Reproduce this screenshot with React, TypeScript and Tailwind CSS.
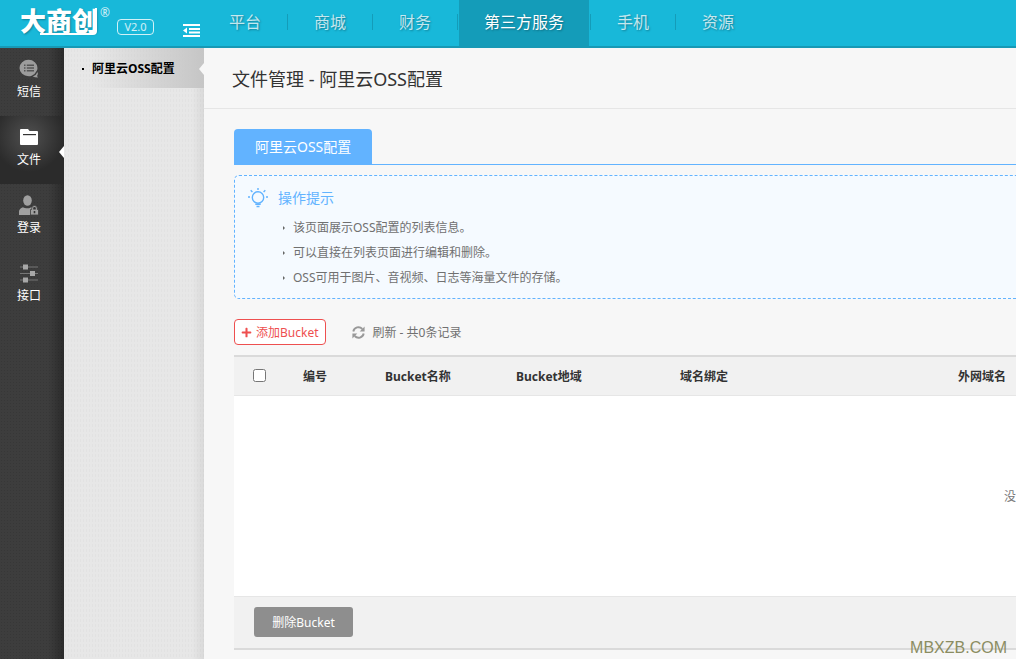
import React from 'react';
import { FaPlus } from 'react-icons/fa';

interface NavItem {
    label: string;
    active?: boolean;
}

interface SideItem {
    label: string;
    icon: React.ReactNode;
    active?: boolean;
}

const navItems: NavItem[] = [
    { label: '平台' },
    { label: '商城' },
    { label: '财务' },
    { label: '第三方服务', active: true },
    { label: '手机' },
    { label: '资源' },
];

const tips = [
    '该页面展示OSS配置的列表信息。',
    '可以直接在列表页面进行编辑和删除。',
    'OSS可用于图片、音视频、日志等海量文件的存储。',
];

const SmsIcon = () => (
    <svg className="h-5 w-5" viewBox="0 0 20 20" fill="#9c9c9c">
        <path d="M9.500.8a9 8.200 0 1 0 0 16.400q1.700 0 3.200-.5 3.300-1.200 4.500-4.200 1.300-1.600 1.300-3.600A9 8.200 0 0 0 9.500.8z" />
        <path d="M18.500 13q-1.200 3.300-4.700 4.500 2.200 1 5.200.9-.8-.8-.8-1.800 1.300-1.500.3-3.600z" />
        <path d="M5 5.500h1.500V7H5zM7.800 5.500H15V7H7.800zM5 8.300h1.500v1.500H5zM7.800 8.300H15v1.500H7.800zM5 11.100h1.500v1.500H5zM7.800 11.100H15v1.500H7.800z" fill="#555" />
    </svg>
);

const FolderIcon = () => (
    <svg className="h-5 w-5" viewBox="0 0 20 20" fill="#fff">
        <path d="M1 3a1 1 0 0 1 1-1h7l1.500 2H18a1 1 0 0 1 1 1v12a1 1 0 0 1-1 1H2a1 1 0 0 1-1-1z" />
        <path d="M4 7h13v1.200H4z" fill="#333" />
    </svg>
);

const LoginIcon = () => (
    <svg className="h-5 w-5" viewBox="0 0 20 20" fill="#a0a0a0">
        <ellipse cx="8.500" cy="5.500" rx="4.300" ry="5.200" />
        <path d="M0 20v-3.500c0-2 1.500-3.500 4-4.300 1.200.8 2.500 1.100 4.500 1.100s2.500-.3 3.500-1l1 .3V20z" />
        <path d="M11.500 14.500h1.200v-1.200a2.800 2.800 0 0 1 5.600 0v1.200h1.200V20h-8z" stroke="#3d3d3d" strokeWidth=".8" />
        <path d="M14.200 14.500v-1.200a1.300 1.300 0 0 1 2.600 0v1.200zM14.700 16h1.600v2.200h-1.600z" fill="#333" />
    </svg>
);

const ApiIcon = () => (
    <svg className="h-5 w-5" viewBox="0 0 20 20">
        <path d="M1 4h18M1 10.500h18M1 17h18" stroke="#777" strokeWidth="1.200" />
        <path d="M4 1.500h5v5H4zM11 8h5v5h-5zM4 14.500h5v5H4z" fill="#a8a8a8" />
    </svg>
);

const BulbIcon = () => (
    <svg className="h-5 w-5" viewBox="0 0 20 20" fill="none" stroke="#62b3ff" strokeWidth="1.400">
        <circle cx="10" cy="9.500" r="5.700" />
        <path d="M7.300 16.200h5.400M8.500 18.500h3M10 0v2M0 9h2M18 9h2M2.700 2.300l1.700 1.700M17.300 2.300l-1.700 1.700" />
    </svg>
);

const RefreshIcon = () => (
    <svg className="h-[13px] w-[13px]" viewBox="0 0 13 13">
        <path d="M1.300 5.500A5.200 5.200 0 0 1 10.300 3M11.700 7.500A5.200 5.200 0 0 1 2.700 10" fill="none" stroke="#999" strokeWidth="1.900" />
        <path d="M12.600.6v4.900H7.700zM.4 12.400V7.500h4.900z" fill="#999" />
    </svg>
);

const CollapseIcon = () => (
    <svg className="h-[13px] w-[17px]" viewBox="0 0 17 13" fill="#fff">
        <path d="M0 0h17v2H0zM6 4h11v2H6zM6 7.500h11v2H6zM0 11h17v2H0zM0 6.500l4-3v6z" />
    </svg>
);

const sideItems: SideItem[] = [
    { label: '短信', icon: <SmsIcon /> },
    { label: '文件', icon: <FolderIcon />, active: true },
    { label: '登录', icon: <LoginIcon /> },
    { label: '接口', icon: <ApiIcon /> },
];

const Header: React.FC = () => (
    <header className="flex h-12 border-b-2 border-[#1799b5] bg-[#18b8d9] text-white">
        <div className="flex w-[203px] shrink-0">
            <div className="relative ml-5 h-full w-[97px]">
                <span className="block text-[26px] leading-[42px] font-black [text-shadow:1px_1px_2px_rgba(0,0,0,0.3)]">大商创</span>
                <svg className="absolute top-2 left-0 h-7 w-[78px]" viewBox="0 0 78 28" fill="none" stroke="#fff" strokeWidth="2">
                    <path d="M20 26h53q3 0 3-3V0" />
                </svg>
                <span className="absolute top-[7px] left-20 text-[12px] leading-3 opacity-80">®</span>
            </div>
            <span className="mt-[19px] h-4 w-[37px] rounded-[4px] border border-white/80 text-center text-[11px] leading-[14px] text-white/80">V2.0</span>
            <button type="button" aria-label="收起菜单" className="mt-6 ml-[29px] h-[13px]">
                <CollapseIcon />
            </button>
        </div>
        <nav className="flex">
            {navItems.map((item, index) => (
                <div key={item.label} className="flex">
                    <a
                        href="#"
                        className={`mx-px px-[25px] text-[16px] leading-[45px] [text-shadow:1px_1px_2px_rgba(0,0,0,0.3)] ${item.active ? 'bg-[#149cb9] text-white' : 'text-white/75'}`}
                    >
                        {item.label}
                    </a>
                    {index < navItems.length - 1 && <span className="mt-[14px] h-4 w-px bg-[#149cb9]" />}
                </div>
            ))}
        </nav>
    </header>
);

const Sidebar: React.FC = () => (
    <aside className="flex shrink-0">
        <nav className="w-16 bg-[#3d3d3d] bg-[linear-gradient(to_right,transparent_75%,rgba(0,0,0,0.3)),radial-gradient(rgba(0,0,0,0.1)_1px,transparent_1px)] bg-[length:100%_100%,3px_3px]">
            {sideItems.map((item) => (
                <a
                    key={item.label}
                    href="#"
                    className={`relative flex h-[68px] flex-col items-center gap-[3px] pt-[11px] pr-[6px] text-[12px] leading-5 text-white ${item.active ? 'bg-[radial-gradient(circle_at_45%_30%,#505050,#2b2b2b_60%)]' : ''}`}
                >
                    {item.icon}
                    {item.label}
                    {item.active && <span className="absolute top-[30px] right-0 border-y-[6px] border-r-[5px] border-y-transparent border-r-white" />}
                </a>
            ))}
        </nav>
        <nav className="w-[140px] bg-[#e7e7e7] bg-[linear-gradient(to_right,transparent_91%,rgba(0,0,0,0.06)),radial-gradient(rgba(0,0,0,0.025)_1px,transparent_1px)] bg-[length:100%_100%,3px_5px]">
            <a href="#" className="relative flex h-10 items-center gap-2 bg-linear-to-r from-transparent from-20% to-[#c6c6c6] pt-px pl-[18px] text-[12px] leading-5 font-bold text-black">
                <span className="h-[2px] w-[2px] bg-black" />
                阿里云OSS配置
                <span className="absolute top-[15px] right-0 border-y-[6px] border-r-[5px] border-y-transparent border-r-[#f7f7f7]" />
            </a>
        </nav>
    </aside>
);

const BucketTable: React.FC = () => (
    <table className="mt-[10px] w-full table-fixed border-collapse border-y-2 border-[#dadada] text-[12px] leading-5">
        <thead>
            <tr className="h-[39px] border-b border-b-[#e6e6e6] bg-[#f1f1f1] text-left text-[#333]">
                <th className="w-[69px] pl-[19px]">
                    <input type="checkbox" aria-label="全选" className="block h-[13px] w-[13px]" />
                </th>
                <th className="w-[82px] pt-[3px]">编号</th>
                <th className="w-[131px] pt-[3px]">Bucket名称</th>
                <th className="w-[164px] pt-[3px]">Bucket地域</th>
                <th className="w-[278px] pt-[3px]">域名绑定</th>
                <th className="pt-[3px]">外网域名</th>
            </tr>
        </thead>
        <tbody>
            <tr className="h-[201px] bg-white text-right text-[#777]">
                <td colSpan={6} className="pt-[3px]">没</td>
            </tr>
        </tbody>
        <tfoot>
            <tr className="border-t border-t-[#e6e6e6] bg-[#f1f1f1]">
                <td colSpan={6} className="h-[53px] pl-5">
                    <button type="button" className="block h-[30px] w-[99px] rounded-[3px] bg-[#8e8e8e] pt-[2px] text-white">
                        删除Bucket
                    </button>
                </td>
            </tr>
        </tfoot>
    </table>
);

const App: React.FC = () => {
    return (
        <div className="relative flex min-h-screen flex-col overflow-hidden bg-[#f7f7f7] font-['Noto_Sans','Noto_Sans_CJK_SC',sans-serif]">
            <Header />
            <div className="flex flex-1">
                <Sidebar />
                <main className="min-w-0 flex-1">
                    <h1 className="border-b border-[#e6e6e6] pt-[2px] pl-7 text-[18px] leading-[58px] text-[#333]">文件管理 - 阿里云OSS配置</h1>
                    <div className="pt-5 pl-[30px]">
                        <div className="flex border-b border-[#62b3ff]">
                            <a href="#" className="rounded-t-[4px] bg-[#62b3ff] px-[21px] text-[14px] leading-[35px] text-white">
                                阿里云OSS配置
                            </a>
                        </div>
                        <section className="mt-[10px] rounded-l-[5px] border border-r-0 border-dashed border-[#62b3ff] bg-[#f5faff] pt-[10px] pb-2 pl-[13px]">
                            <h2 className="flex items-center gap-[10px] text-[14px] leading-6 text-[#62b3ff]">
                                <BulbIcon />
                                操作提示
                            </h2>
                            <ul className="mt-[5px] pl-[35px] text-[12px] leading-[25px] text-[#707070]">
                                {tips.map((tip) => (
                                    <li key={tip} className="flex items-center gap-2">
                                        <span className="border-y-2 border-l-2 border-y-transparent border-l-[#666]" />
                                        {tip}
                                    </li>
                                ))}
                            </ul>
                        </section>
                        <div className="mt-5 flex items-center text-[12px] leading-6">
                            <button type="button" className="flex h-[26px] items-center gap-1 rounded-[4px] border border-[#ee4f4f] bg-white px-[6px] pt-px text-[#ee4f4f]">
                                <FaPlus className="h-[11px] w-[11px]" />
                                添加Bucket
                            </button>
                            <button type="button" className="ml-[26px] flex items-center gap-2 pt-px text-[#707070]">
                                <RefreshIcon />
                                刷新 - 共0条记录
                            </button>
                        </div>
                        <BucketTable />
                    </div>
                </main>
            </div>
            <span className="absolute right-[9px] bottom-px font-['Liberation_Sans',sans-serif] text-[16px] leading-5 text-[#8b8d62]">MBXZB.COM</span>
        </div>
    );
};

export default App;
